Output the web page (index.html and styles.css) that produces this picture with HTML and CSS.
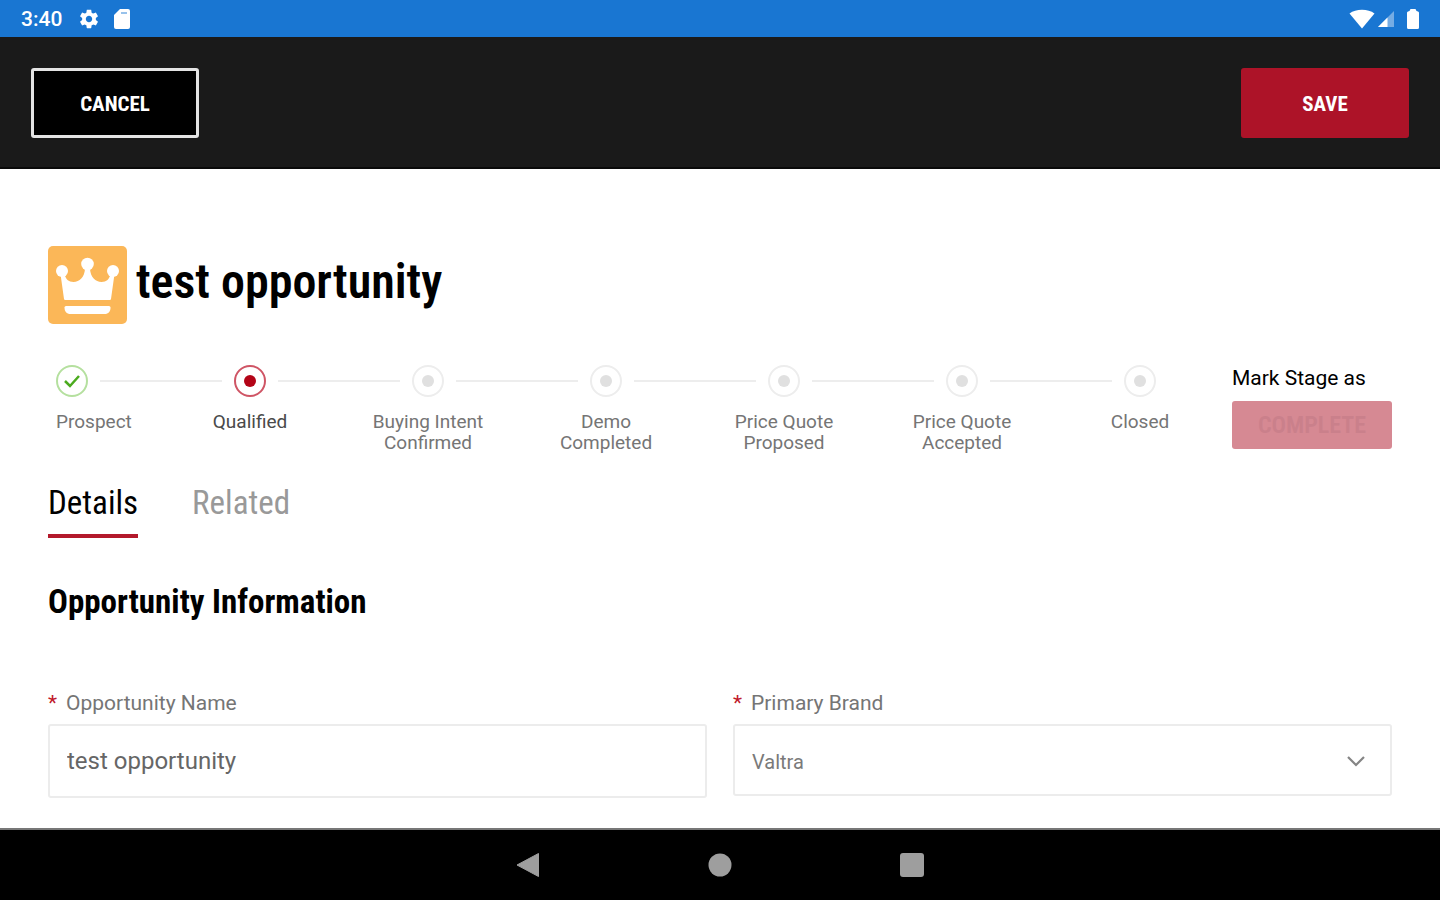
FILE: index.html
```html
<!DOCTYPE html>
<html lang="en">
<head>
<meta charset="utf-8">
<meta name="viewport" content="width=device-width, initial-scale=1">
<title>test opportunity</title>
<link rel="stylesheet" href="styles.css">
</head>
<body>
<div class="status-bar">
  <div class="status-group">
    <span class="clock">3:40</span>
    <svg class="gear" width="22" height="22" viewBox="0 0 24 24" aria-hidden="true"><path fill="#fff" d="M19.43 12.98c.04-.32.07-.64.07-.98s-.03-.66-.07-.98l2.11-1.65c.19-.15.24-.42.12-.64l-2-3.46c-.12-.22-.39-.3-.61-.22l-2.49 1c-.52-.4-1.08-.73-1.69-.98l-.38-2.65C14.46 2.18 14.25 2 14 2h-4c-.25 0-.46.18-.49.42l-.38 2.65c-.61.25-1.17.59-1.69.98l-2.49-1c-.23-.09-.49 0-.61.22l-2 3.46c-.13.22-.07.49.12.64l2.11 1.65c-.04.32-.07.65-.07.98s.03.66.07.98l-2.11 1.65c-.19.15-.24.42-.12.64l2 3.46c.12.22.39.3.61.22l2.49-1c.52.4 1.08.73 1.69.98l.38 2.65c.03.24.24.42.49.42h4c.25 0 .46-.18.49-.42l.38-2.65c.61-.25 1.17-.59 1.69-.98l2.49 1c.23.09.49 0 .61-.22l2-3.46c.12-.22.07-.49-.12-.64l-2.11-1.65zM12 15.5c-1.93 0-3.5-1.57-3.5-3.5s1.57-3.5 3.5-3.5 3.5 1.57 3.5 3.5-1.57 3.5-3.5 3.5z"/></svg>
    <svg width="16" height="20" viewBox="0 0 16 20" aria-hidden="true"><path fill="#fff" d="M6 0h8a2 2 0 0 1 2 2v16a2 2 0 0 1-2 2H2a2 2 0 0 1-2-2V6z"/><path stroke="#1976d2" stroke-opacity=".6" stroke-width="1.5" d="M7 4h6"/></svg>
  </div>
  <div class="status-group status-right">
    <svg width="26" height="20" viewBox="0 0 26 20" aria-hidden="true"><path fill="#fff" d="M13 19.500.5 4.500C4 2 8 .8 13 .8S22 2 25.500 4.500z"/></svg>
    <svg width="18" height="18" viewBox="0 0 18 18" aria-hidden="true"><path fill="#fff" fill-opacity=".4" d="M17 1v16H1z"/><path fill="#fff" d="M10.500 7.500V17H1z"/></svg>
    <svg class="battery" width="12" height="20" viewBox="0 0 12 20" aria-hidden="true"><path fill="#fff" d="M3.500 0h5l1 2 1.500.5a1.500 1.500 0 0 1 1 1.500v14.500a1.500 1.500 0 0 1-1.500 1.500h-9A1.500 1.500 0 0 1 0 18.500V4a1.500 1.500 0 0 1 1-1.500L2.500 2z"/></svg>
  </div>
</div>

<header class="toolbar">
  <button class="btn btn-cancel" type="button">CANCEL</button>
  <button class="btn btn-save" type="submit" form="opportunity">SAVE</button>
</header>

<main class="content">
  <div class="title-row">
    <svg width="79" height="78" viewBox="0 0 79 78" aria-hidden="true">
      <rect width="79" height="78" rx="5" fill="#fbb758"/>
      <g fill="#fff">
        <circle cx="14" cy="25" r="6"/><circle cx="39.500" cy="18" r="6.300"/><circle cx="65" cy="25" r="6"/>
        <path d="M12.500 28h4c1 5 4 8 9 8 6 0 11-5 11.500-13h5c.5 8 5.500 13 11.500 13 5 0 8-3 9-8h4L63 53q0 1-1.500 1h-44Q16 54 16 53z"/>
        <path d="M18 60h43q1.500 0 1.500 1.500c0 4-2 6.500-6 6.500h-34c-4 0-6-2.500-6-6.500Q16.500 60 18 60z"/>
      </g>
    </svg>
    <h1>test opportunity</h1>
  </div>

  <div class="path-row">
    <ol class="path">
      <li class="step done"><span class="dot"><svg width="18" height="14" viewBox="0 0 18 14" aria-hidden="true"><path fill="none" stroke="#4bab1e" stroke-width="2.500" d="M2 7l5 5 9-10"/></svg></span><span class="step-label">Prospect</span></li>
      <li class="line" aria-hidden="true"></li>
      <li class="step current" aria-current="step"><span class="dot"></span><span class="step-label">Qualified</span></li>
      <li class="line" aria-hidden="true"></li>
      <li class="step"><span class="dot"></span><span class="step-label">Buying Intent<br>Confirmed</span></li>
      <li class="line" aria-hidden="true"></li>
      <li class="step"><span class="dot"></span><span class="step-label">Demo<br>Completed</span></li>
      <li class="line" aria-hidden="true"></li>
      <li class="step"><span class="dot"></span><span class="step-label">Price Quote<br>Proposed</span></li>
      <li class="line" aria-hidden="true"></li>
      <li class="step"><span class="dot"></span><span class="step-label">Price Quote<br>Accepted</span></li>
      <li class="line" aria-hidden="true"></li>
      <li class="step"><span class="dot"></span><span class="step-label">Closed</span></li>
    </ol>
    <div class="mark">
      <span id="mark-label">Mark Stage as</span>
      <button class="btn-complete" type="button" aria-describedby="mark-label" disabled>COMPLETE</button>
    </div>
  </div>

  <nav class="tabs">
    <a class="tab active" href="#details">Details</a>
    <a class="tab" href="#related">Related</a>
  </nav>

  <h2 id="details">Opportunity Information</h2>

  <form class="fields" id="opportunity">
    <div class="field">
      <label for="name"><span class="req">*</span>Opportunity Name</label>
      <input id="name" class="control name-input" type="text" value="test opportunity">
    </div>
    <div class="field">
      <label for="brand"><span class="req">*</span>Primary Brand</label>
      <div class="select-wrap">
        <select id="brand" class="control brand-select"><option>Valtra</option></select>
        <svg class="chevron" width="20" height="12" viewBox="0 0 20 12" aria-hidden="true"><path fill="none" stroke="#858585" stroke-width="2.200" d="M2 2l8 8 8-8"/></svg>
      </div>
    </div>
  </form>
</main>

<footer class="nav-bar">
  <button class="nav-btn" type="button" aria-label="Back"><svg width="26" height="26" viewBox="0 0 26 26"><path fill="#9e9e9e" stroke="#9e9e9e" stroke-linejoin="round" d="M23.500 1.500v23L2 13z"/></svg></button>
  <button class="nav-btn" type="button" aria-label="Home"><svg width="26" height="26" viewBox="0 0 26 26"><circle cx="13" cy="13" r="11.500" fill="#9e9e9e"/></svg></button>
  <button class="nav-btn" type="button" aria-label="Recents"><svg width="26" height="26" viewBox="0 0 26 26"><rect x="1" y="1" width="24" height="24" rx="3" fill="#9e9e9e"/></svg></button>
</footer>
</body>
</html>
```

FILE: styles.css
```css
* {
  box-sizing: border-box;
}

body {
  margin: 0;
  min-height: 100vh;
  display: flex;
  flex-direction: column;
  background: #fff;
  color: #000;
  font-family: Roboto, "Liberation Sans", sans-serif;
}

.status-bar {
  height: 37px;
  padding: 0 21px;
  display: flex;
  align-items: center;
  justify-content: space-between;
  background: #1976d2;
  color: #fff;
}

.status-group {
  display: flex;
  align-items: center;
}

.clock {
  font-size: 21px;
  font-weight: 500;
}

.gear {
  margin: 0 14px 0 16px;
}

.status-right {
  gap: 2px;
}

.battery {
  margin-left: 10px;
}

.toolbar {
  padding: 31px 31px 29px;
  display: flex;
  justify-content: space-between;
  background: #1a1a1a;
  border-bottom: 2px solid #0a0a0a;
}

.btn,
.btn-complete,
h1,
h2,
.tab {
  font-family: "Roboto Condensed", "Liberation Sans Narrow", Roboto, sans-serif;
}

.btn {
  width: 168px;
  height: 70px;
  padding: 2px 0 0;
  border-radius: 3px;
  color: #fff;
  font-size: 21px;
  font-weight: 700;
}

.btn-cancel {
  background: #000;
  border: 3px solid #e4e4e4;
}

.btn-save {
  background: #ad1328;
  border: 0;
}

.content {
  flex: 1;
  padding: 77px 48px 30px;
}

.title-row {
  display: flex;
  gap: 9px;
}

h1 {
  margin: 0;
  font-size: 48px;
  line-height: 72px;
  font-weight: 600;
}

.path-row {
  margin-top: 41px;
  padding-left: 8px;
  display: flex;
  gap: 76px;
}

.path {
  flex: 1;
  margin: 0;
  padding: 0;
  list-style: none;
  display: flex;
}

.step {
  width: 32px;
  display: flex;
  flex-direction: column;
  align-items: center;
  gap: 14px;
}

.step.done {
  align-items: flex-start;
}

.dot {
  flex: none;
  width: 32px;
  height: 32px;
  border: 2px solid #ededed;
  border-radius: 50%;
  display: flex;
  align-items: center;
  justify-content: center;
}

.dot::before {
  content: "";
  width: 12px;
  height: 12px;
  border-radius: 50%;
  background: #e0e0e0;
}

.done .dot {
  border-color: #b5e09f;
}

.done .dot::before {
  display: none;
}

.current .dot {
  border-color: #cf5565;
}

.current .dot::before {
  background: #b30417;
}

.step-label {
  color: #757575;
  font-size: 19px;
  line-height: 21px;
  text-align: center;
  white-space: nowrap;
}

.current .step-label {
  color: #4a4a4a;
}

.line {
  flex: 1;
  height: 2px;
  margin: 15px 12px 0;
  background: #ededed;
}

.mark {
  width: 160px;
  display: flex;
  flex-direction: column;
  gap: 10px;
  font-size: 21px;
  line-height: 26px;
}

.btn-complete {
  height: 48px;
  padding: 0;
  border: 0;
  border-radius: 3px;
  background: #d68993;
  color: #ca808b;
  font-size: 24px;
  font-weight: 600;
}

.tabs {
  margin-top: 26px;
  display: flex;
  gap: 54px;
}

.tab {
  padding-bottom: 7px;
  border-bottom: 4px solid transparent;
  color: #999;
  font-size: 33px;
  line-height: 48px;
  text-decoration: none;
}

.tab.active {
  color: #000;
  border-color: #b3192b;
}

h2 {
  margin: 42px 0 0;
  font-size: 33px;
  line-height: 44px;
  font-weight: 700;
}

.fields {
  margin-top: 66px;
  display: grid;
  grid-template-columns: 1fr 1fr;
  gap: 26px;
}

.field label {
  display: flex;
  margin-bottom: 8px;
  color: #757575;
  font-size: 21px;
  line-height: 26px;
}

.req {
  width: 18px;
  color: #c0182b;
}

.control {
  width: 100%;
  padding: 0 17px;
  border: 2px solid #ececec;
  border-radius: 3px;
  background: #fff;
  color: #666;
  font-family: inherit;
}

.name-input {
  height: 74px;
  font-size: 24px;
}

.select-wrap {
  position: relative;
}

.brand-select {
  height: 72px;
  padding-top: 3px;
  appearance: none;
  color: #7a7a7a;
  font-size: 20px;
}

.chevron {
  position: absolute;
  right: 26px;
  top: 31px;
  pointer-events: none;
}

.nav-bar {
  height: 72px;
  display: flex;
  align-items: center;
  justify-content: center;
  gap: 166px;
  border-top: 2px solid #777;
  background: #000;
}

.nav-btn {
  display: flex;
  padding: 0;
  border: 0;
  background: none;
}
```
